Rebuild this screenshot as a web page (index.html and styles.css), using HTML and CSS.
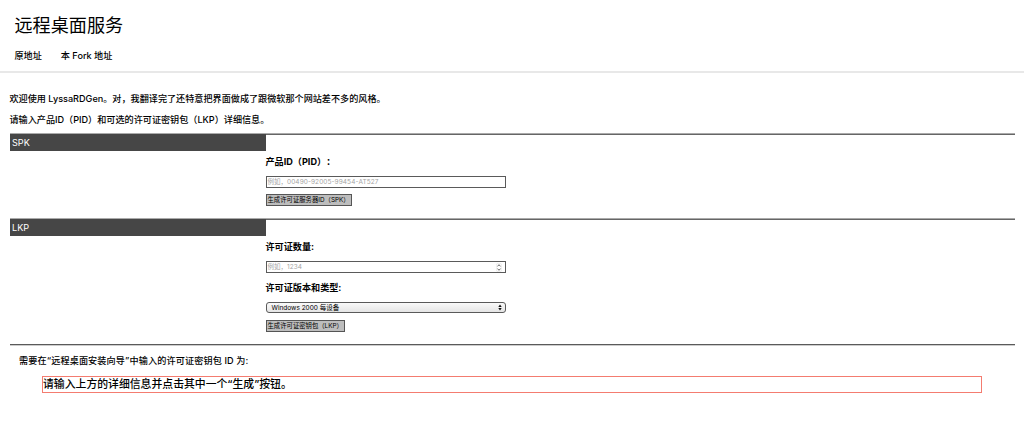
FILE: index.html
```html
<!DOCTYPE html>
<html lang="zh-CN">
<head>
<meta charset="utf-8">
<title>远程桌面服务</title>
<link rel="stylesheet" href="styles.css">
</head>
<body>
<header class="header">
  <h1 class="title">远程桌面服务</h1>
  <nav class="nav"><a>原地址</a><a>本 Fork 地址</a></nav>
</header>
<main class="main">
  <p class="intro">欢迎使用 LyssaRDGen。对，我翻译完了还特意把界面做成了跟微软那个网站差不多的风格。</p>
  <p class="intro">请输入产品ID（PID）和可选的许可证密钥包（LKP）详细信息。</p>
  <section class="section spk">
    <h2 class="tag">SPK</h2>
    <form class="form">
      <label class="label">产品ID（PID）<span lang="zh-TW" class="colon">：</span></label>
      <div class="field"><span>例如，<span class="digits">00490-92005-99454-AT527</span></span></div>
      <button type="button" class="button">生成许可证服务器ID（SPK）</button>
    </form>
  </section>
  <section class="section lkp">
    <h2 class="tag">LKP</h2>
    <form class="form">
      <label class="label">许可证数量:</label>
      <div class="field"><span>例如，<span class="digits">1234</span></span>
        <svg class="stepper" viewBox="0 0 6 9"><rect x=".3" y=".3" width="5.4" height="8.4" rx="2" fill="#fff" stroke="#ddd" stroke-width=".5"/><path d="M1.5 3.4 3 1.7l1.5 1.7M1.5 5.6 3 7.3l1.5-1.7" fill="none" stroke="#555" stroke-width=".9"/></svg>
      </div>
      <label class="label">许可证版本和类型:</label>
      <div class="select"><span>Windows 2000 每设备</span>
        <svg class="arrows" viewBox="0 0 4 7"><path d="M.3 2.9 2 .4l1.7 2.5zM.3 4.1 2 6.6l1.7-2.5z" fill="#111"/></svg>
      </div>
      <button type="button" class="button">生成许可证密钥包（LKP）</button>
    </form>
  </section>
  <section class="result">
    <p class="result-label">需要在“远程桌面安装向导”中输入的许可证密钥包 ID 为:</p>
    <div class="output">请输入上方的详细信息并点击其中一个“生成”按钮。</div>
  </section>
</main>
</body>
</html>
```
FILE: styles.css
```css
* { box-sizing: border-box; }
body {
  margin: 0;
  background: #fff;
  color: #000;
  font: 9.12px/14px Inter, "Noto Sans CJK SC", sans-serif;
  white-space: nowrap;
}
h1, h2, p { margin: 0; font-weight: 400; }
.header {
  height: 73px;
  padding: 11px 14.5px 0;
  border-bottom: 2px solid #e8e8e8;
}
.title { font-size: 18.1px; line-height: 28px; }
.nav { display: flex; gap: 19px; margin-top: 10px; font-weight: 500; }
.main { padding: 19px 9.5px 0; }
.intro { height: 20.5px; line-height: 14px; font-weight: 450; }
.section {
  display: flex;
  align-items: flex-start;
  border-top: 1px solid #aaa;
  background: linear-gradient(#666, #666) top / 100% 1px no-repeat;
}
.spk { height: 85px; }
.lkp { height: 126px; }
.tag {
  width: 256px;
  height: 17px;
  padding-left: 2.5px;
  background: #464646;
  color: #fff;
  font-size: 9.12px;
  line-height: 18px;
}
.form { display: flex; flex-direction: column; align-items: flex-start; padding-top: 21px; }
.label { height: 14px; margin-bottom: 7px; font-weight: 700; text-spacing-trim: space-all; }
.field, .select {
  display: flex;
  align-items: center;
  justify-content: space-between;
  width: 240px;
  height: 12px;
  border: 1px solid #5a5a5a;
  font-size: 6.5px;
  line-height: 10px;
}
.field { padding: 0 3px 0 1px; margin-bottom: 6px; color: #a5a5a5; }
.lkp .field { margin-bottom: 8px; }
.digits { letter-spacing: .08px; }
.stepper { width: 6px; height: 9px; }
.select {
  height: 11px;
  padding: 0 3px 0 5px;
  margin-bottom: 7px;
  border-radius: 3px;
  background: linear-gradient(#fafafa, #e5e5e5);
}
.arrows { width: 4px; height: 7px; }
.button {
  height: 12px;
  padding: 0 1px;
  border: 1px solid #555;
  border-radius: 0;
  background: #bdbdbd;
  color: #000;
  font: 6.35px/10px Inter, "Noto Sans CJK SC", sans-serif;
}
.result {
  border-top: 1px solid #5a5a5a;
  background: linear-gradient(#ccc, #ccc) top / 100% 1px no-repeat;
  padding-top: 9px;
}
.result-label { margin-left: 9.5px; font-weight: 450; letter-spacing: .13px; }
.output {
  width: 940px;
  height: 17px;
  margin: 8px 0 0 32.5px;
  border: 1px solid #f47c70;
  font-size: 10.85px;
  font-weight: 450;
  line-height: 15px;
}
```
